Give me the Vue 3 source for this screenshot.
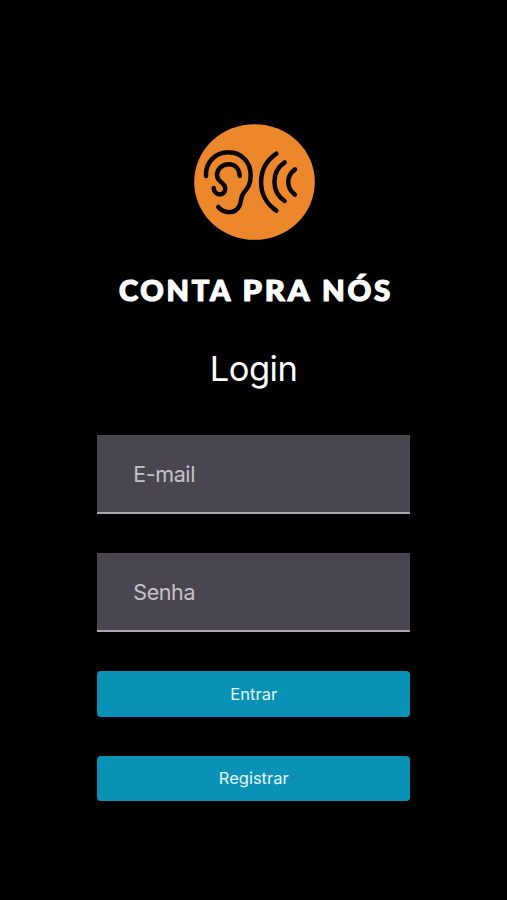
<script setup>
import { ref } from 'vue'

const email = ref('')
const password = ref('')
</script>

<template>
  <main class="screen">
    <svg class="logo" viewBox="30 27 363 348" preserveAspectRatio="none" aria-hidden="true">
      <ellipse cx="211.500" cy="201" rx="181" ry="173.500" fill="#ec872b" />
      <g fill="none" stroke="#080402" stroke-width="13.500" stroke-linecap="round" stroke-linejoin="round">
        <path d="M66 183C64 143 93 112 133 112C174 112 200 143 200 181C200 211 190 220 180 232C169 245 173 258 166 273C154 298 120 296 103 276" />
        <path d="M167 183C166 161 154 148 134 148C113 148 99 163 99 181C99 202 124 201 124 220C124 245 91 244 89 219" />
        <path d="M277 116C216 158 216 246 277 287" />
        <path d="M302 142C261 170 261 230 302 258" />
        <path d="M333 163C306 183 306 218 333 239" />
      </g>
    </svg>
    <svg class="brand" viewBox="0 0 290 40" role="heading" aria-level="1">
      <text x="10" y="30.500" textLength="114" lengthAdjust="spacingAndGlyphs">CONTA</text>
      <text x="133.500" y="30.500" textLength="70" lengthAdjust="spacingAndGlyphs">PRA</text>
      <text x="213" y="30.500" textLength="71" lengthAdjust="spacingAndGlyphs">NÓS</text>
    </svg>
    <h2 class="title">Login</h2>
    <form class="form" @submit.prevent>
      <input v-model="email" class="field" type="email" placeholder="E-mail" />
      <input v-model="password" class="field" type="password" placeholder="Senha" />
      <button class="button" type="submit">Entrar</button>
      <button class="button" type="button">Registrar</button>
    </form>
  </main>
</template>

<style>
body {
  margin: 0;
  background: #000;
}
</style>

<style scoped>
.screen {
  box-sizing: border-box;
  min-height: 900px;
  padding-top: 124px;
  display: flex;
  flex-direction: column;
  align-items: center;
  background: #000;
  font-family: Inter, "Liberation Sans", sans-serif;
}
.logo {
  display: block;
  width: 121px;
  height: 116px;
  margin-left: 2px;
}
.brand {
  display: block;
  width: 290px;
  height: 40px;
  margin: 30px 0 0 1px;
  overflow: visible;
  font: 900 28px Lato, sans-serif;
  letter-spacing: 2.6px;
  fill: #fff;
  stroke: #fff;
  stroke-width: 1.2px;
  stroke-linejoin: round;
}
.title {
  margin: 39px 0 0;
  height: 40px;
  line-height: 40px;
  font-size: 34.5px;
  font-weight: 400;
  letter-spacing: -0.5px;
  color: #fff;
}
.form {
  width: 313px;
  margin: 46px 0 0 0.5px;
  display: flex;
  flex-direction: column;
}
.field {
  box-sizing: border-box;
  width: 100%;
  height: 79px;
  margin: 0 0 39px;
  padding: 0 36px;
  border: 0;
  border-bottom: 2px solid #a9a5ac;
  border-radius: 0;
  outline: 0;
  background: #4a4650;
  color: #fff;
  font: 400 21.5px Inter, sans-serif;
  letter-spacing: -0.4px;
}
.field::placeholder {
  color: #c5c0ca;
  opacity: 1;
}
.button {
  height: 45.5px;
  margin: 0 0 39px;
  padding: 0;
  border: 0;
  border-radius: 4px;
  background: #0992b6;
  color: #e4f8fc;
  font: 400 16.5px Inter, sans-serif;
}
</style>
